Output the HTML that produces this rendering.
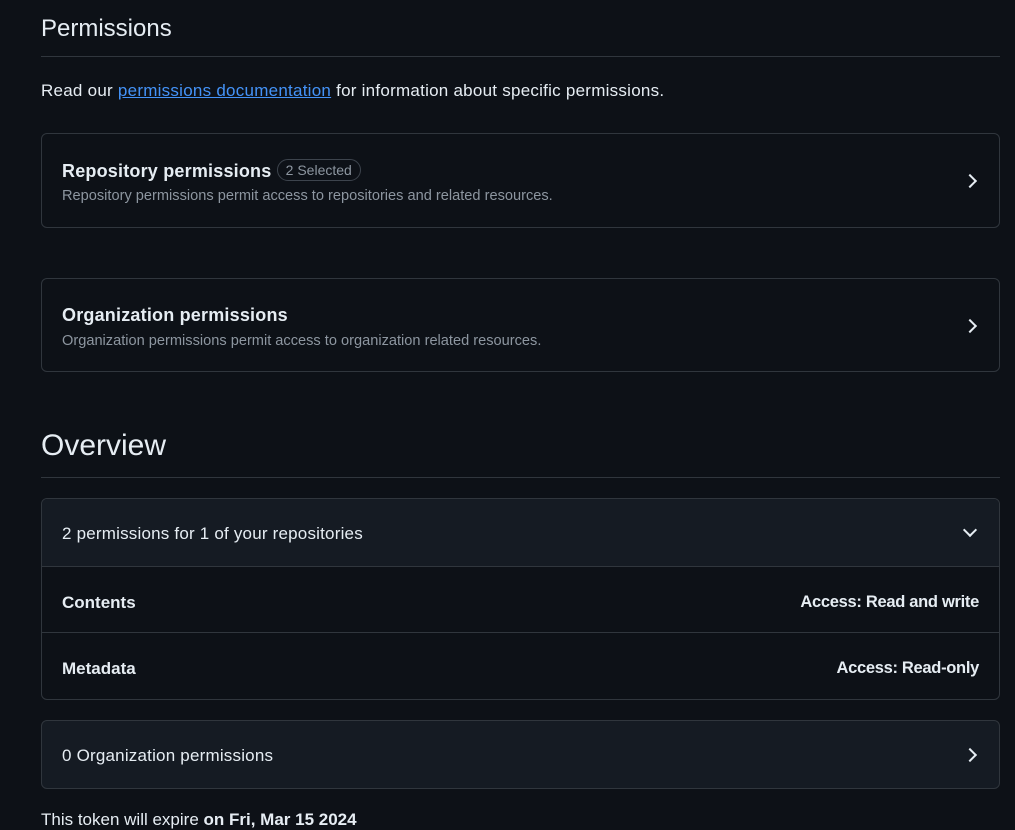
<!DOCTYPE html>
<html><head><style>
body{margin:0;background:#0d1117;color:#e6edf3;font-family:"Liberation Sans",sans-serif;width:1015px;height:824px;overflow:hidden;position:relative}
.a{position:absolute}
.box{position:absolute;left:41px;width:959px;border:1px solid #30363d;border-radius:6px;box-sizing:border-box}
.chev{position:absolute;right:24px;width:8px;height:8px;border-right:2px solid #e6edf3;border-top:2px solid #e6edf3;transform:rotate(45deg)}
.t{font-size:18px;font-weight:bold}
.s{font-size:14.6px;color:#8d96a0}
</style></head><body>
<div class="a" style="left:41px;top:15px;font-size:24px">Permissions</div>
<div class="a" style="left:41px;top:56px;width:959px;border-top:1px solid #30363d"></div>
<div class="a" style="left:41px;top:81px;font-size:17px;letter-spacing:0.25px">Read our <span style="color:#4493f8;text-decoration:underline">permissions documentation</span> for information about specific permissions.</div>
<div class="box" style="top:133px;height:95px">
<div class="a t" style="left:20px;top:27px;letter-spacing:0.2px">Repository permissions <span style="font-weight:normal;font-size:14px;color:#8d96a0;border:1px solid #3d444d;border-radius:12px;padding:2px 8px;position:relative;top:-2px;letter-spacing:0">2 Selected</span></div>
<div class="a s" style="left:20px;top:54px">Repository permissions permit access to repositories and related resources.</div>
<div class="chev" style="top:42px"></div></div>
<div class="box" style="top:278px;height:94px">
<div class="a t" style="left:20px;top:26px;letter-spacing:0.2px">Organization permissions</div>
<div class="a s" style="left:20px;top:54px">Organization permissions permit access to organization related resources.</div>
<div class="chev" style="top:42px"></div></div>
<div class="a" style="left:41px;top:429px;font-size:30px">Overview</div>
<div class="a" style="left:41px;top:477px;width:959px;border-top:1px solid #30363d"></div>
<div class="box" style="top:498px;height:202px;overflow:hidden">
<div class="a" style="left:0;top:0;right:0;height:67px;background:#151b23;border-bottom:1px solid #30363d"></div>
<div class="a" style="left:20px;top:25px;font-size:17px;letter-spacing:0.2px">2 permissions for 1 of your repositories</div>
<div class="a" style="right:24px;top:26px;width:8px;height:8px;border-right:2px solid #e6edf3;border-bottom:2px solid #e6edf3;transform:rotate(45deg)"></div>
<div class="a" style="left:20px;top:94px;font-size:17px;font-weight:bold">Contents</div>
<div class="a" style="right:20px;top:94px;font-size:16.5px;font-weight:bold;letter-spacing:-0.3px">Access: Read and write</div>
<div class="a" style="left:0;right:0;top:133px;border-top:1px solid #30363d"></div>
<div class="a" style="left:20px;top:160px;font-size:17px;font-weight:bold">Metadata</div>
<div class="a" style="right:20px;top:160px;font-size:16.5px;font-weight:bold;letter-spacing:-0.3px">Access: Read-only</div>
</div>
<div class="box" style="top:720px;height:69px;background:#151b23">
<div class="a" style="left:20px;top:25px;font-size:17px;letter-spacing:0.2px">0 Organization permissions</div>
<div class="chev" style="top:29px"></div></div>
<div class="a" style="left:41px;top:810px;font-size:17px">This token will expire <b>on Fri, Mar 15 2024</b></div>
</body></html>
